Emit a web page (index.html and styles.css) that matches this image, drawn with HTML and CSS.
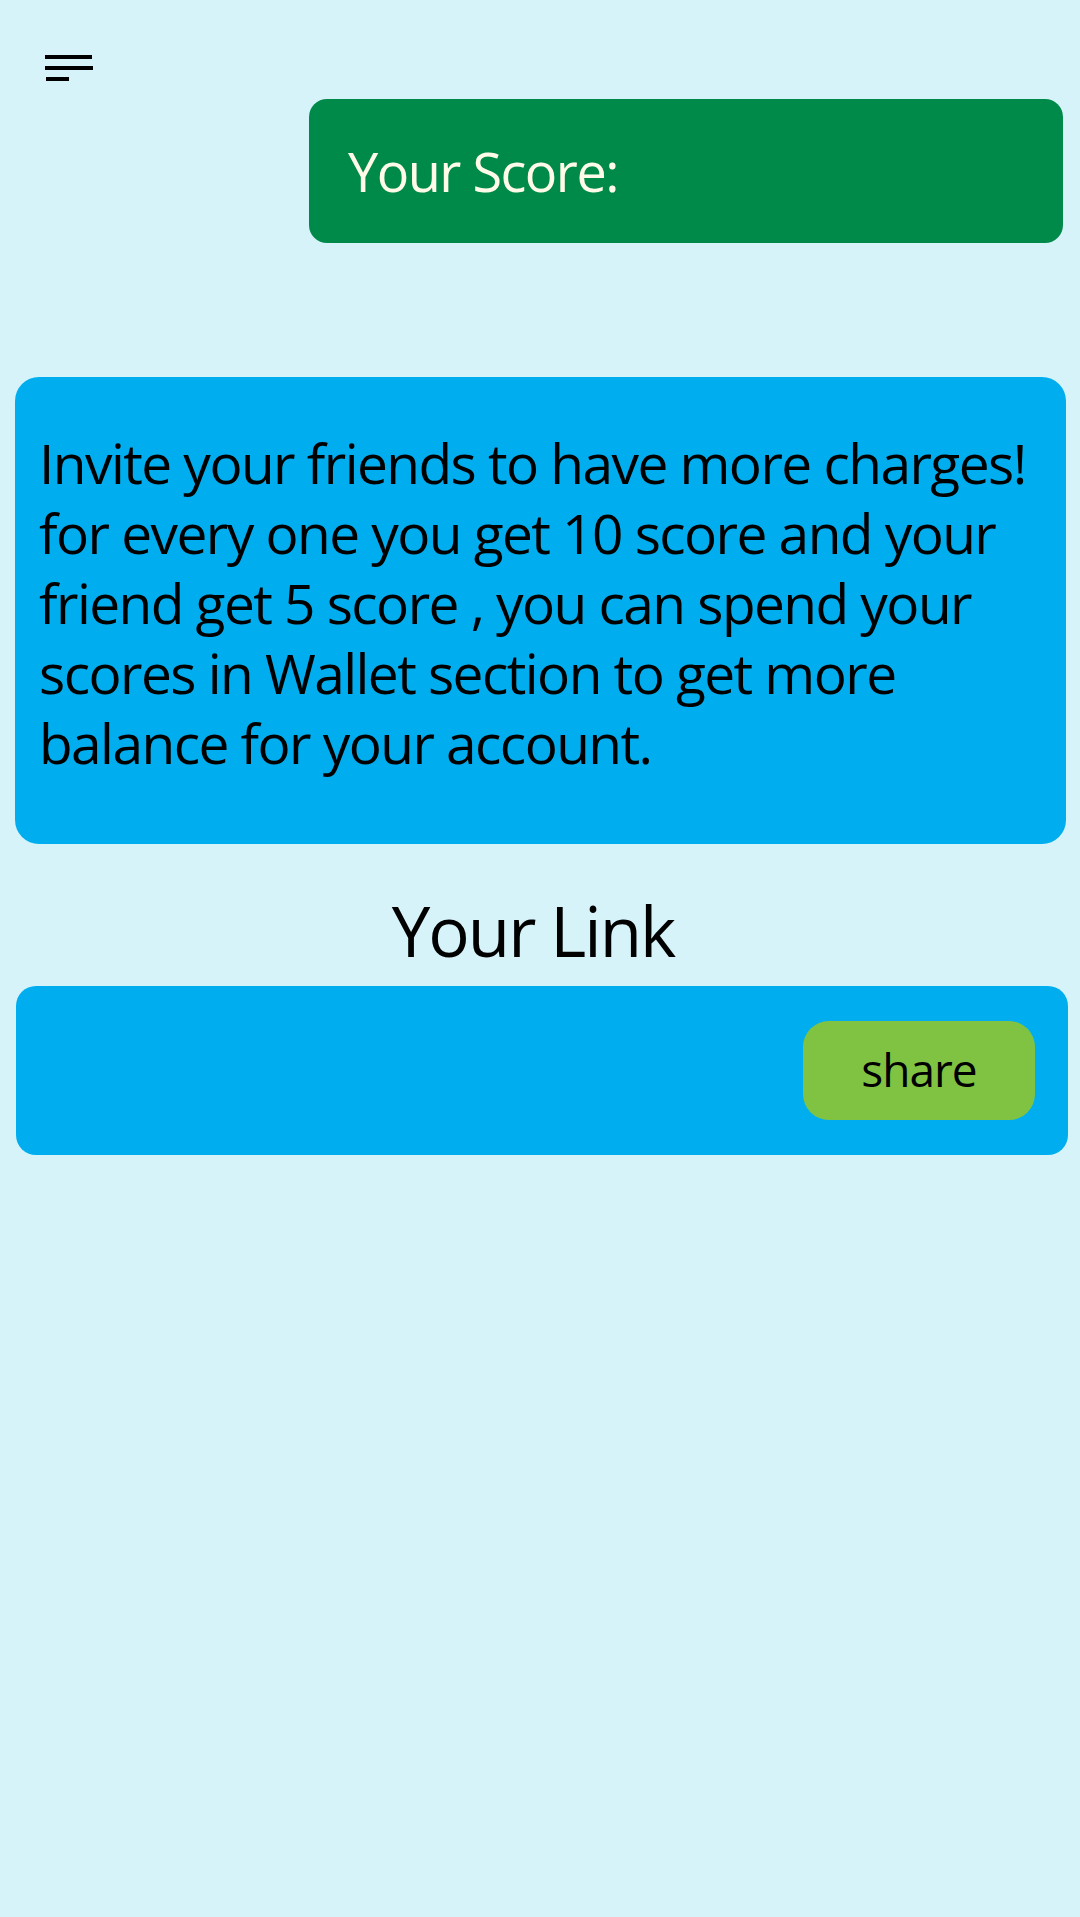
FILE: index.html
```html
<!DOCTYPE html>
<html lang="en">
<head>
<meta charset="utf-8">
<title>Invite Friends</title>
<link rel="stylesheet" href="styles.css">
</head>
<body>
<div class="page">
  <header class="topbar">
    <button class="menu-btn" aria-label="Menu">
      <svg width="48" height="27" viewBox="0 0 48 27">
        <rect x="0" y="0" width="47" height="4" fill="#000"/>
        <rect x="0" y="11" width="48" height="4" fill="#000"/>
        <rect x="1" y="22" width="23" height="4" fill="#000"/>
      </svg>
    </button>
  </header>

  <section class="score-card">
    <span class="score-label">Your Score:</span>
  </section>

  <section class="info-card">
    <p class="info-text">Invite your friends to have more charges!<br>for every one you get 10 score and your<br>friend get 5 score , you can spend your<br>scores in Wallet section to get more<br>balance for your account.</p>
  </section>

  <h2 class="link-title">Your Link</h2>

  <section class="link-card">
    <button class="share-btn">share</button>
  </section>
</div>
</body>
</html>
```

FILE: styles.css
```css
html, body {
  margin: 0;
  padding: 0;
}

body {
  background: #d7f3fa;
  font-family: "Open Sans", "Noto Sans", "Liberation Sans", sans-serif;
  color: #000;
}

.page {
  width: 1080px;
  min-height: 1917px;
  box-sizing: border-box;
  display: flex;
  flex-direction: column;
}

.topbar {
  height: 99px;
  padding-left: 45px;
  padding-top: 55px;
  box-sizing: border-box;
}

.menu-btn {
  display: block;
  background: none;
  border: 0;
  padding: 0;
  margin: 0;
  line-height: 0;
}

.score-card {
  margin-left: 309px;
  width: 754px;
  height: 144px;
  background: #008a4a;
  border-radius: 18px;
  display: flex;
  align-items: center;
  padding-left: 39px;
  box-sizing: border-box;
}

.score-label {
  color: #fffbe8;
  font-size: 54px;
  letter-spacing: -1.5px;
  line-height: 1;
}

.info-card {
  margin-top: 134px;
  margin-left: 15px;
  width: 1051px;
  height: 467px;
  background: #00aeef;
  border-radius: 24px;
  box-sizing: border-box;
  padding: 51px 0 0 24px;
}

.info-text {
  margin: 0;
  font-size: 55px;
  line-height: 70px;
  letter-spacing: -1.55px;
  white-space: nowrap;
}

.link-title {
  margin: 0;
  height: 142px;
  padding-top: 52px;
  padding-right: 14px;
  box-sizing: border-box;
  text-align: center;
  font-weight: 400;
  font-size: 69px;
  line-height: 1;
  letter-spacing: -2px;
}

.link-card {
  margin-left: 16px;
  width: 1052px;
  height: 169px;
  background: #00aeef;
  border-radius: 20px;
  display: flex;
  align-items: center;
  justify-content: flex-end;
  padding-right: 33px;
  box-sizing: border-box;
}

.share-btn {
  width: 232px;
  height: 99px;
  background: #80c342;
  border: 0;
  border-radius: 26px;
  font-family: inherit;
  font-size: 46px;
  color: #000;
  letter-spacing: -1px;
  padding: 0 0 4px 0;
}
```
